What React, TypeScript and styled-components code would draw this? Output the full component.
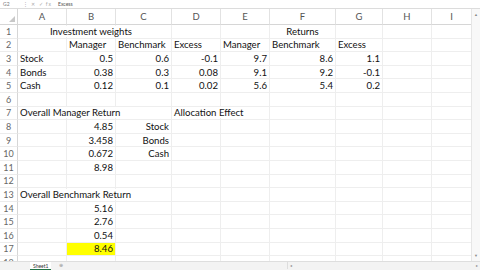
import styled, { createGlobalStyle } from "styled-components";

const GlobalStyle = createGlobalStyle`
  html, body {
    margin: 0;
    padding: 0;
    background: #fff;
    overflow: hidden;
  }
  body {
    font-family: Lato, "Open Sans", sans-serif;
  }
`;

type Align = "left" | "right" | "center";
type CellData = { v: string; align: Align; hl?: boolean } | null;

const COLS = ["A", "B", "C", "D", "E", "F", "G", "H", "I"];
const WIDTHS = [49, 49, 56, 49, 49, 66, 47, 49, 40];
const ROW_COUNT = 18;

const num = (v: string, hl = false): CellData => ({ v, align: "right", hl });
const txt = (v: string, align: Align = "left"): CellData => ({ v, align });

const DATA: Record<number, CellData[]> = {
  1: [null, txt("Investment weights", "center"), null, null, null, txt("Returns", "center")],
  2: [null, txt("Manager"), txt("Benchmark"), txt("Excess"), txt("Manager"), txt("Benchmark"), txt("Excess")],
  3: [txt("Stock"), num("0.5"), num("0.6"), num("-0.1"), num("9.7"), num("8.6"), num("1.1")],
  4: [txt("Bonds"), num("0.38"), num("0.3"), num("0.08"), num("9.1"), num("9.2"), num("-0.1")],
  5: [txt("Cash"), num("0.12"), num("0.1"), num("0.02"), num("5.6"), num("5.4"), num("0.2")],
  7: [txt("Overall Manager Return"), null, null, txt("Allocation Effect")],
  8: [null, num("4.85"), txt("Stock", "right")],
  9: [null, num("3.458"), txt("Bonds", "right")],
  10: [null, num("0.672"), txt("Cash", "right")],
  11: [null, num("8.98")],
  13: [txt("Overall Benchmark Return")],
  14: [null, num("5.16")],
  15: [null, num("2.76")],
  16: [null, num("0.54")],
  17: [null, num("8.46", true)],
};

export default function App() {
  const rowNums = Array.from({ length: ROW_COUNT }, (_, i) => i + 1);
  return (
    <Screen>
      <GlobalStyle />
      <FormulaBar>
        <NameBox>G2</NameBox>
        <FxIcons>⋮ ✕ ✓ fx</FxIcons>
        <FormulaText>Excess</FormulaText>
      </FormulaBar>
      <SheetArea>
        <Sheet>
          <Corner>
            <svg width="6" height="6" viewBox="0 0 6 6">
              <polygon points="6,0 6,6 0,6" fill="#c8c8c8" />
            </svg>
          </Corner>
          {COLS.map((c) => (
            <ColHeader key={c}>{c}</ColHeader>
          ))}
          {rowNums.map((r) => {
            const cells = DATA[r] || [];
            return [
              <RowHeader key={`h${r}`}>{r}</RowHeader>,
              ...COLS.map((c, i) => {
                const d = cells[i];
                return (
                  <Cell key={`${c}${r}`} $align={d ? d.align : "left"} $hl={!!d?.hl}>
                    {d && <CellText $hl={!!d.hl}>{d.v}</CellText>}
                  </Cell>
                );
              }),
            ];
          })}
        </Sheet>
        <VScroll>
          <ScrollArrow>▲</ScrollArrow>
          <ScrollArrow>▼</ScrollArrow>
        </VScroll>
      </SheetArea>
      <BottomBar>
        <TabSpacer />
        <SheetTab>Sheet1</SheetTab>
        <AddSheet>⊕</AddSheet>
        <HScroll>
          <ScrollArrow>◂</ScrollArrow>
          <ScrollArrow>▸</ScrollArrow>
        </HScroll>
      </BottomBar>
    </Screen>
  );
}

const Screen = styled.div`
  width: 480px;
  height: 270px;
  display: flex;
  flex-direction: column;
  overflow: hidden;
  background: #fff;
`;

const FormulaBar = styled.div`
  height: 8px;
  flex: none;
  display: flex;
  align-items: center;
  gap: 6px;
  padding: 0 3px;
  font-size: 5px;
  color: #777;
  border-bottom: 1px solid #dcdcdc;
`;

const NameBox = styled.span`
  width: 14px;
`;

const FxIcons = styled.span`
  color: #aaa;
  letter-spacing: 1px;
`;

const FormulaText = styled.span`
  color: #555;
`;

const SheetArea = styled.div`
  flex: 1;
  display: flex;
  min-height: 0;
`;

const Sheet = styled.div`
  flex: 1;
  display: grid;
  grid-template-columns: 18px ${WIDTHS.map((w) => `${w}px`).join(" ")};
  grid-template-rows: 16px repeat(${ROW_COUNT}, 13.6px);
  overflow: hidden;
`;

const Corner = styled.div`
  display: flex;
  align-items: flex-end;
  justify-content: flex-end;
  padding: 0 2px 2px 0;
  border-right: 1px solid #d6d6d6;
  border-bottom: 1px solid #d6d6d6;
`;

const ColHeader = styled.div`
  display: flex;
  align-items: center;
  justify-content: center;
  font-size: 9.5px;
  color: #555;
  border-right: 1px solid #e2e2e2;
  border-bottom: 1px solid #d6d6d6;
`;

const RowHeader = styled.div`
  display: flex;
  align-items: center;
  justify-content: center;
  font-size: 9px;
  color: #666;
  border-right: 1px solid #d6d6d6;
  border-bottom: 1px solid #ececec;
`;

const Cell = styled.div<{ $align: Align; $hl: boolean }>`
  display: flex;
  align-items: center;
  justify-content: ${(p) =>
    p.$align === "right" ? "flex-end" : p.$align === "center" ? "center" : "flex-start"};
  padding: 0 2px;
  min-width: 0;
  white-space: nowrap;
  overflow: visible;
  font-size: 9.6px;
  color: #111;
  background: ${(p) => (p.$hl ? "#ffff00" : "transparent")};
  border-right: 1px solid #eeeeee;
  border-bottom: 1px solid #eeeeee;
`;

const CellText = styled.span<{ $hl: boolean }>`
  position: relative;
  z-index: 1;
  flex: none;
  line-height: 11px;
  background: ${(p) => (p.$hl ? "#ffff00" : "#fff")};
`;

const VScroll = styled.div`
  width: 8px;
  flex: none;
  display: flex;
  flex-direction: column;
  justify-content: space-between;
  align-items: center;
  padding: 3px 0;
  background: #f8f8f8;
  border-left: 1px solid #e6e6e6;
`;

const ScrollArrow = styled.span`
  font-size: 4px;
  color: #888;
  line-height: 5px;
`;

const BottomBar = styled.div`
  height: 8px;
  flex: none;
  display: flex;
  align-items: flex-start;
  background: #f3f3f3;
  border-top: 1px solid #dedede;
  font-size: 5px;
  color: #555;
`;

const TabSpacer = styled.span`
  width: 30px;
  flex: none;
`;

const SheetTab = styled.span`
  background: #fff;
  padding: 1px 3px 0;
  line-height: 6px;
  border-bottom: 1px solid #217346;
  color: #333;
`;

const AddSheet = styled.span`
  margin-left: 8px;
  color: #999;
  line-height: 7px;
`;

const HScroll = styled.div`
  margin-left: auto;
  width: 188px;
  height: 7px;
  display: flex;
  align-items: center;
  justify-content: space-between;
  padding: 0 2px;
  border-left: 1px solid #ddd;
`;
